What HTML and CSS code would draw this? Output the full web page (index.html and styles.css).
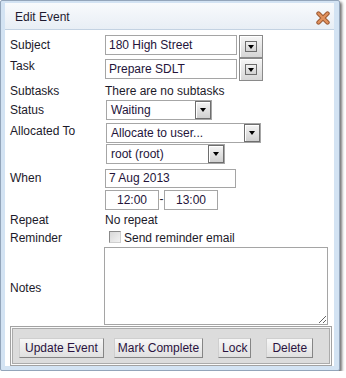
FILE: index.html
```html
<!DOCTYPE html>
<html lang="en">
<head>
    <meta charset="UTF-8">
    <title>Edit Event</title>
    <link rel="stylesheet" href="styles.css">
</head>
<body>
    <div class="dialog">
        <div class="panel">
            <div class="titlebar">
                <span class="title">Edit Event</span>
                <svg class="close" width="14" height="14" viewBox="0 0 14 14">
                    <path d="M2.5 2.5 L11.5 11.5 M11.5 2.5 L2.5 11.5" stroke="#9c5a33" stroke-width="4.4" stroke-linecap="round" fill="none"/>
                    <path d="M2.5 2.5 L11.5 11.5 M11.5 2.5 L2.5 11.5" stroke="#e2925e" stroke-width="2.4" stroke-linecap="round" fill="none"/>
                </svg>
            </div>

            <div class="form">
                <!-- Тема -->
                <div class="row row-combo row-subject">
                    <span class="lbl">Subject</span>
                    <input class="txt txt-combo" type="text" value="180 High Street">
                    <span class="combo-btn"><span class="combo-icon"></span></span>
                </div>
                <div class="row row-combo row-task">
                    <span class="lbl lbl-task">Task</span>
                    <input class="txt txt-combo txt-task" type="text" value="Prepare SDLT">
                    <span class="combo-btn"><span class="combo-icon"></span></span>
                </div>
                <div class="row row-text row-subtasks">
                    <span class="lbl">Subtasks</span>
                    <span class="val">There are no subtasks</span>
                </div>

                <!-- Статус и назначение -->
                <div class="row row-status">
                    <span class="lbl">Status</span>
                    <div class="select sel-status"><span class="sel-val">Waiting</span><span class="sel-arrow"></span></div>
                </div>
                <div class="row row-top row-alloc">
                    <span class="lbl lbl-top">Allocated To</span>
                    <div class="select sel-alloc"><span class="sel-val">Allocate to user...</span><span class="sel-arrow"></span></div>
                </div>
                <div class="row row-user">
                    <span class="lbl"></span>
                    <div class="select sel-user"><span class="sel-val">root (root)</span><span class="sel-arrow"></span></div>
                </div>

                <!-- Дата и время -->
                <div class="row row-when">
                    <span class="lbl">When</span>
                    <input class="txt txt-date" type="text" value="7 Aug 2013">
                </div>
                <div class="row row-time">
                    <span class="lbl"></span>
                    <input class="txt txt-time" type="text" value="12:00">
                    <span class="dash">-</span>
                    <input class="txt txt-time" type="text" value="13:00">
                </div>

                <div class="row row-text row-repeat">
                    <span class="lbl">Repeat</span>
                    <span class="val">No repeat</span>
                </div>
                <div class="row row-text">
                    <span class="lbl">Reminder</span>
                    <span class="check"></span>
                    <span class="val check-text">Send reminder email</span>
                </div>
                <div class="row row-notes">
                    <span class="lbl lbl-notes">Notes</span>
                    <textarea class="notes"></textarea>
                </div>
            </div>

            <!-- Кнопки -->
            <div class="actions">
                <button class="btn">Update Event</button>
                <button class="btn btn-tight btn-mark">Mark Complete</button>
                <button class="btn btn-tight btn-lock">Lock</button>
                <button class="btn btn-delete">Delete</button>
            </div>
        </div>
    </div>
</body>
</html>
```

FILE: styles.css
```css
/* Общий стиль */
body {
    margin: 0;
    background: #fff;
    font-family: "Liberation Sans", Arial, sans-serif;
    font-size: 12px;
    color: #1c1a2a;
}

/* Окно */
.dialog {
    width: 340px;
    height: 371px;
    box-sizing: border-box;
    border: 1px solid #93a5ba;
    border-radius: 2px;
    background: #d3e3f3;
    padding: 2px 5px 4px 4px;
    box-shadow: 2px 2px 3px rgba(0, 0, 0, 0.55);
    display: flex;
    flex-direction: column;
}

.panel {
    flex: 1;
    background: #fff;
    display: flex;
    flex-direction: column;
}

.titlebar {
    height: 25px;
    padding: 1px 4px 0 10px;
    border-bottom: 1px solid #c3d2e2;
    background: linear-gradient(#f8fafc, #e8eef5);
    display: flex;
    align-items: center;
    justify-content: space-between;
}

.title {
    font-size: 12px;
    color: #1e1a30;
}

.close {
    margin-top: 2px;
}

/* Форма */
.form {
    padding: 5px 0 0 5px;
}

.row {
    display: flex;
    align-items: center;
}

.row-combo {
    align-items: flex-start;
    height: 23px;
}

.row-task {
    margin-top: 0;
}

.row-text {
    height: 18px;
    line-height: 18px;
}

.row-subtasks {
    margin-top: 1px;
}

.lbl {
    width: 95px;
    flex: none;
    line-height: 20px;
}

.lbl-task {
    line-height: 17px;
}

.row-top {
    align-items: flex-start;
    margin-top: 3px;
}

.lbl-top {
    line-height: 17px;
}

.row-user {
    margin-top: 1px;
}

.row-when {
    margin-top: 4px;
}

.row-time {
    margin-top: 2px;
}

.row-repeat {
    margin-top: 1px;
}

.val {
    color: #1c1a2a;
}

/* Поля */
.txt {
    box-sizing: border-box;
    height: 20px;
    margin: 0;
    padding: 0 3px;
    border: 1px solid #a5a5a5;
    font-family: inherit;
    font-size: 12px;
    color: #24143a;
    outline: none;
}

.txt-combo {
    width: 132px;
}

.txt-task {
    margin-top: 1px;
}

.txt-date {
    width: 131px;
    height: 19px;
}

.txt-time {
    width: 54px;
    text-align: center;
}

.dash {
    width: 5px;
    text-align: center;
    margin-top: -3px;
}

.combo-btn {
    box-sizing: border-box;
    width: 24px;
    height: 23px;
    margin-left: 2px;
    border: 1px solid #8a8a8a;
    background: linear-gradient(#f6f6f6, #d6d6d6);
    box-shadow: inset 1px 1px 0 #fff;
    display: flex;
    align-items: center;
    justify-content: center;
}

.combo-icon {
    box-sizing: border-box;
    width: 12px;
    height: 11px;
    border: 1px solid #6c6c6c;
    background: linear-gradient(#f0f0f0, #d2d2d2);
    display: flex;
    align-items: center;
    justify-content: center;
}

.combo-icon::before,
.sel-arrow::before {
    content: "";
    border-top: 4px solid #000;
    border-left: 3.5px solid transparent;
    border-right: 3.5px solid transparent;
}

/* Списки */
.select {
    box-sizing: border-box;
    height: 20px;
    margin-left: 1px;
    border: 1px solid #a6a6a6;
    background: #fff;
    display: flex;
}

.sel-status {
    width: 106px;
}

.sel-alloc {
    width: 155px;
}

.sel-user {
    width: 119px;
}

.sel-val {
    flex: 1;
    padding-left: 4px;
    line-height: 18px;
    color: #24143a;
    white-space: nowrap;
}

.sel-arrow {
    box-sizing: border-box;
    width: 16px;
    border: 1px solid #6e6e6e;
    background: linear-gradient(#f4f4f4, #d0d0d0);
    box-shadow: inset 1px 1px 0 #fff;
    display: flex;
    align-items: center;
    justify-content: center;
}

/* Напоминание */
.check {
    box-sizing: border-box;
    width: 12px;
    height: 12px;
    margin: 0 3px 2px 4px;
    border: 1px solid;
    border-color: #8a8a8a #cfcfcf #cfcfcf #8a8a8a;
    background: linear-gradient(135deg, #d8d8d8, #f2f2f2);
}

.row-notes {
    align-items: center;
}

.lbl-notes {
    padding-top: 4px;
}

.notes {
    box-sizing: border-box;
    width: 224px;
    height: 78px;
    margin: 0 0 0 -1px;
    border: 1px solid #a5a5a5;
    font-family: inherit;
    outline: none;
}

/* Панель кнопок */
.actions {
    box-sizing: border-box;
    width: 322px;
    height: 40px;
    margin: 1px 0 0 5px;
    padding: 11px 0 0 8px;
    border: 1px solid #a2a2a2;
    background: #dcdcdc;
    box-shadow: inset 0 0 0 1px #fafafa, inset 0 0 0 2px #ababab;
    display: flex;
    align-items: flex-start;
}

.btn {
    height: 20px;
    padding: 0 5px;
    border: 1px solid;
    border-color: #cfcfcf #858585 #858585 #cfcfcf;
    background: linear-gradient(#f7f7f7, #e0e0e0);
    font-family: inherit;
    font-size: 12px;
    color: #2a1340;
    cursor: pointer;
}

.btn-tight {
    padding: 0 3px;
}

.btn-mark {
    margin-left: 10px;
}

.btn-lock,
.btn-delete {
    margin-left: 15px;
}
```
